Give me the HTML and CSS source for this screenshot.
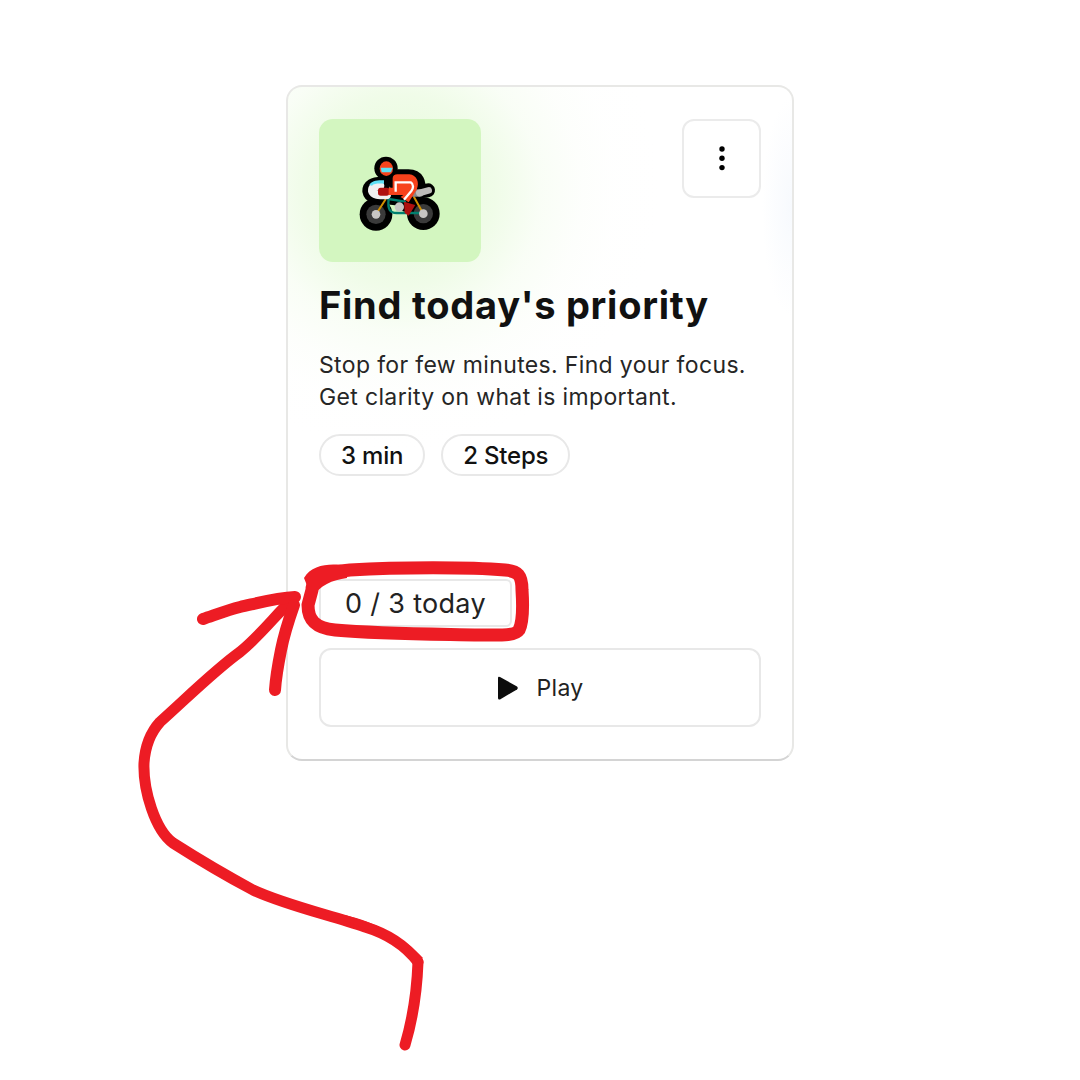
FILE: index.html
```html
<!DOCTYPE html>
<html lang="en">
<head>
    <meta charset="UTF-8">
    <meta name="viewport" content="width=device-width, initial-scale=1.0">
    <title>Find today's priority</title>
    <link rel="stylesheet" href="styles.css">
</head>
<body>
    <div class="page">
        <div class="card">
            <div class="card-top">
                <div class="icon-tile">
                    <!-- motorcycle emoji, drawn on a 3x grid -->
                    <svg class="bike" width="120" height="100" viewBox="0 0 360 300">
                        <g fill="none" stroke="#000" stroke-linecap="round" stroke-linejoin="round">
                            <path d="M125 132 C100 132 92 140 92 150 C94 162 105 164 135 164 L200 172" stroke-width="50"/>
                            <path d="M175 118 L205 118 C222 118 226 128 222 145 L200 180" stroke-width="66"/>
                            <path d="M215 155 L264 148" stroke-width="42"/>
                        </g>
                        <circle cx="138" cy="82" r="35" fill="#000"/>
                        <circle cx="108" cy="220" r="49" fill="#000"/>
                        <circle cx="250" cy="218" r="49" fill="#000"/>
                        <circle cx="108" cy="220" r="29" fill="#3a3a3a"/>
                        <circle cx="250" cy="218" r="29" fill="#3a3a3a"/>
                        <ellipse cx="139" cy="83" rx="20" ry="22" fill="#f7421c"/>
                        <path d="M122 80 H158 L153 94 H125 Z" fill="#5fe0f5"/>
                        <g fill="none" stroke-linecap="round" stroke-linejoin="round">
                            <path d="M136 176 L108 220" stroke="#d09000" stroke-width="6"/>
                            <path d="M222 168 L250 218" stroke="#d09000" stroke-width="6"/>
                            <path d="M146 174 C142 205 150 216 170 216 H250" stroke="#00806f" stroke-width="7"/>
                            <path d="M146 174 L195 182" stroke="#00806f" stroke-width="7"/>
                            <path d="M120 134 C102 134 96 140 97 150 C100 162 116 162 140 162" stroke="#f1f0f0" stroke-width="26"/>
                            <path d="M220 156 H240" stroke="#8a8a8a" stroke-width="22"/>
                            <path d="M238 156 L266 148" stroke="#bdbbb9" stroke-width="20"/>
                        </g>
                        <path d="M88 132 C94 120 110 117 132 118 V128 C112 127 102 128 96 134 Z" fill="#5fe0f5"/>
                        <circle cx="108" cy="220" r="13" fill="#c8c6c4"/>
                        <circle cx="250" cy="218" r="13" fill="#c8c6c4"/>
                        <rect x="114" y="140" width="34" height="24" rx="8" fill="#b0100f"/>
                        <path d="M146 140 H158 V112 C158 104 164 100 172 100 H208 C230 102 240 124 230 146 L206 184 L182 168 L190 162 H146 Z" fill="#f7421c"/>
                        <path d="M167 152 V124 H212 C222 130 220 142 214 150 L192 176" fill="none" stroke="#fff" stroke-width="7"/>
                        <circle cx="178" cy="198" r="14" fill="#c8c6c4"/>
                        <path d="M192 182 L226 192 L206 224 L194 216 Z" fill="#b0100f"/>
                    </svg>
                </div>
                <button class="menu-btn" type="button">
                    <svg width="6" height="25" viewBox="0 0 6 25"><circle cx="3" cy="3" r="2.7"/><circle cx="3" cy="12.2" r="2.7"/><circle cx="3" cy="21.6" r="2.7"/></svg>
                </button>
            </div>
            <h2 class="title">Find today's priority</h2>
            <p class="desc">Stop for few minutes. Find your focus.<br>Get clarity on what is important.</p>
            <div class="pills">
                <span class="pill">3 min</span>
                <span class="pill">2 Steps</span>
            </div>
            <div class="count">0 / 3 today</div>
            <button class="play-btn" type="button">
                <svg width="22" height="26" viewBox="0 0 22 26"><path d="M3 2 L20 11.5 Q21.5 13 20 14.5 L3 24.5 Q1 25 1 23 V3 Q1 1 3 2 Z"/></svg>
                <span>Play</span>
            </button>
        </div>
        <!-- red marker annotation on top of the screenshot -->
        <svg class="scribble" width="1080" height="1080" viewBox="0 0 1080 1080">
            <g fill="none" stroke="#ed1c24" stroke-linecap="round" stroke-linejoin="round">
                <path d="M405 1045 C413 1018 417 990 418 962" stroke-width="11"/>
                <path d="M418 962 C405 945 385 933 365 927 C330 915 285 905 253 890 C225 875 195 857 173 843 C155 830 143 790 144 763 C145 748 150 733 160 722 C190 695 215 670 240 652 C262 634 278 612 292 600" stroke-width="11"/>
                <path d="M203 619 C215 615 228 610 240 607 C258 603 275 598 295 597" stroke-width="12"/>
                <path d="M275 690 C276 675 278 665 281 650 C284 635 288 622 294 605" stroke-width="12"/>
                <path d="M312 590 C312 576 330 572 350 570 C400 567 470 567 505 570 C518 571 522 575 522 590 C523 605 523 622 519 630 C515 636 500 635 480 635 C430 634 380 634 335 630 C315 628 308 620 308 605 Z" stroke-width="13"/>
            </g>
            <path d="M345 915 C375 922 405 938 423 958 L418 962 C405 948 385 935 345 921 Z" fill="#ed1c24"/>
            <path d="M304 578 C312 564 332 563 347 566 L347 578 C332 580 320 585 312 598 Z" fill="#ed1c24"/>
        </svg>
    </div>
</body>
</html>
```

FILE: styles.css
```css
body {
    font-family: Inter, "Liberation Sans", sans-serif;
    margin: 0;
    padding: 0;
    background-color: #fff;
    color: #111;
}
.page {
    position: relative;
    display: flex;
    justify-content: center;
    height: 1080px;
    padding-top: 85px;
    box-sizing: border-box;
    overflow: hidden;
}
.card {
    display: flex;
    flex-direction: column;
    width: 508px;
    height: 676px;
    padding: 32px 31px 32px;
    box-sizing: border-box;
    border: 2px solid #e8e8e6;
    border-bottom-color: #d4d4d4;
    border-radius: 16px;
    background:
        radial-gradient(circle at 112px 104px, rgba(200, 245, 175, 0.5) 0, rgba(215, 247, 195, 0.38) 95px, rgba(232, 250, 220, 0.26) 140px, rgba(242, 251, 235, 0.16) 180px, rgba(250, 253, 246, 0.07) 215px, rgba(255, 255, 255, 0) 260px),
        radial-gradient(ellipse 30px 110px at 100% 120px, rgba(228, 237, 250, 0.3) 0, rgba(255, 255, 255, 0) 100%),
        #fff;
}
.card-top {
    display: flex;
    justify-content: space-between;
    align-items: flex-start;
}
.icon-tile {
    display: flex;
    align-items: center;
    justify-content: center;
    width: 162px;
    height: 143px;
    background: #d3f6c0;
    border-radius: 14px;
}
.menu-btn {
    display: flex;
    align-items: center;
    justify-content: center;
    width: 79px;
    height: 79px;
    padding: 0;
    border: 2px solid #ebebeb;
    border-radius: 12px;
    background: #fff;
}
.title {
    margin: 20px 0 0;
    font-size: 38px;
    line-height: 46px;
    font-weight: 700;
    letter-spacing: 0.75px;
}
.desc {
    margin: 21px 0 0;
    font-size: 23px;
    line-height: 32px;
    letter-spacing: 0.35px;
    color: #262626;
}
.pills {
    display: flex;
    gap: 16px;
    margin-top: 21px;
}
.pill {
    padding: 0 20px;
    height: 42px;
    line-height: 40px;
    box-sizing: border-box;
    border: 2px solid #e8e8e8;
    border-radius: 21px;
    font-size: 24px;
    font-weight: 500;
    letter-spacing: -0.2px;
}
.count {
    display: flex;
    align-items: center;
    justify-content: center;
    width: 193px;
    height: 48px;
    margin-top: auto;
    margin-bottom: 21px;
    box-sizing: border-box;
    border: 2px solid #e8e8e8;
    border-radius: 6px;
    font-size: 27px;
    letter-spacing: 0.3px;
    color: #222;
}
.play-btn {
    display: flex;
    align-items: center;
    justify-content: center;
    gap: 18px;
    width: 100%;
    height: 79px;
    border: 2px solid #e8e8e8;
    border-radius: 12px;
    background: #fff;
    font-family: inherit;
    font-size: 23px;
    letter-spacing: 0.3px;
    color: #222;
}
.play-btn svg {
    fill: #0c0c0c;
}
.scribble {
    position: absolute;
    left: 0;
    top: 0;
}
```
